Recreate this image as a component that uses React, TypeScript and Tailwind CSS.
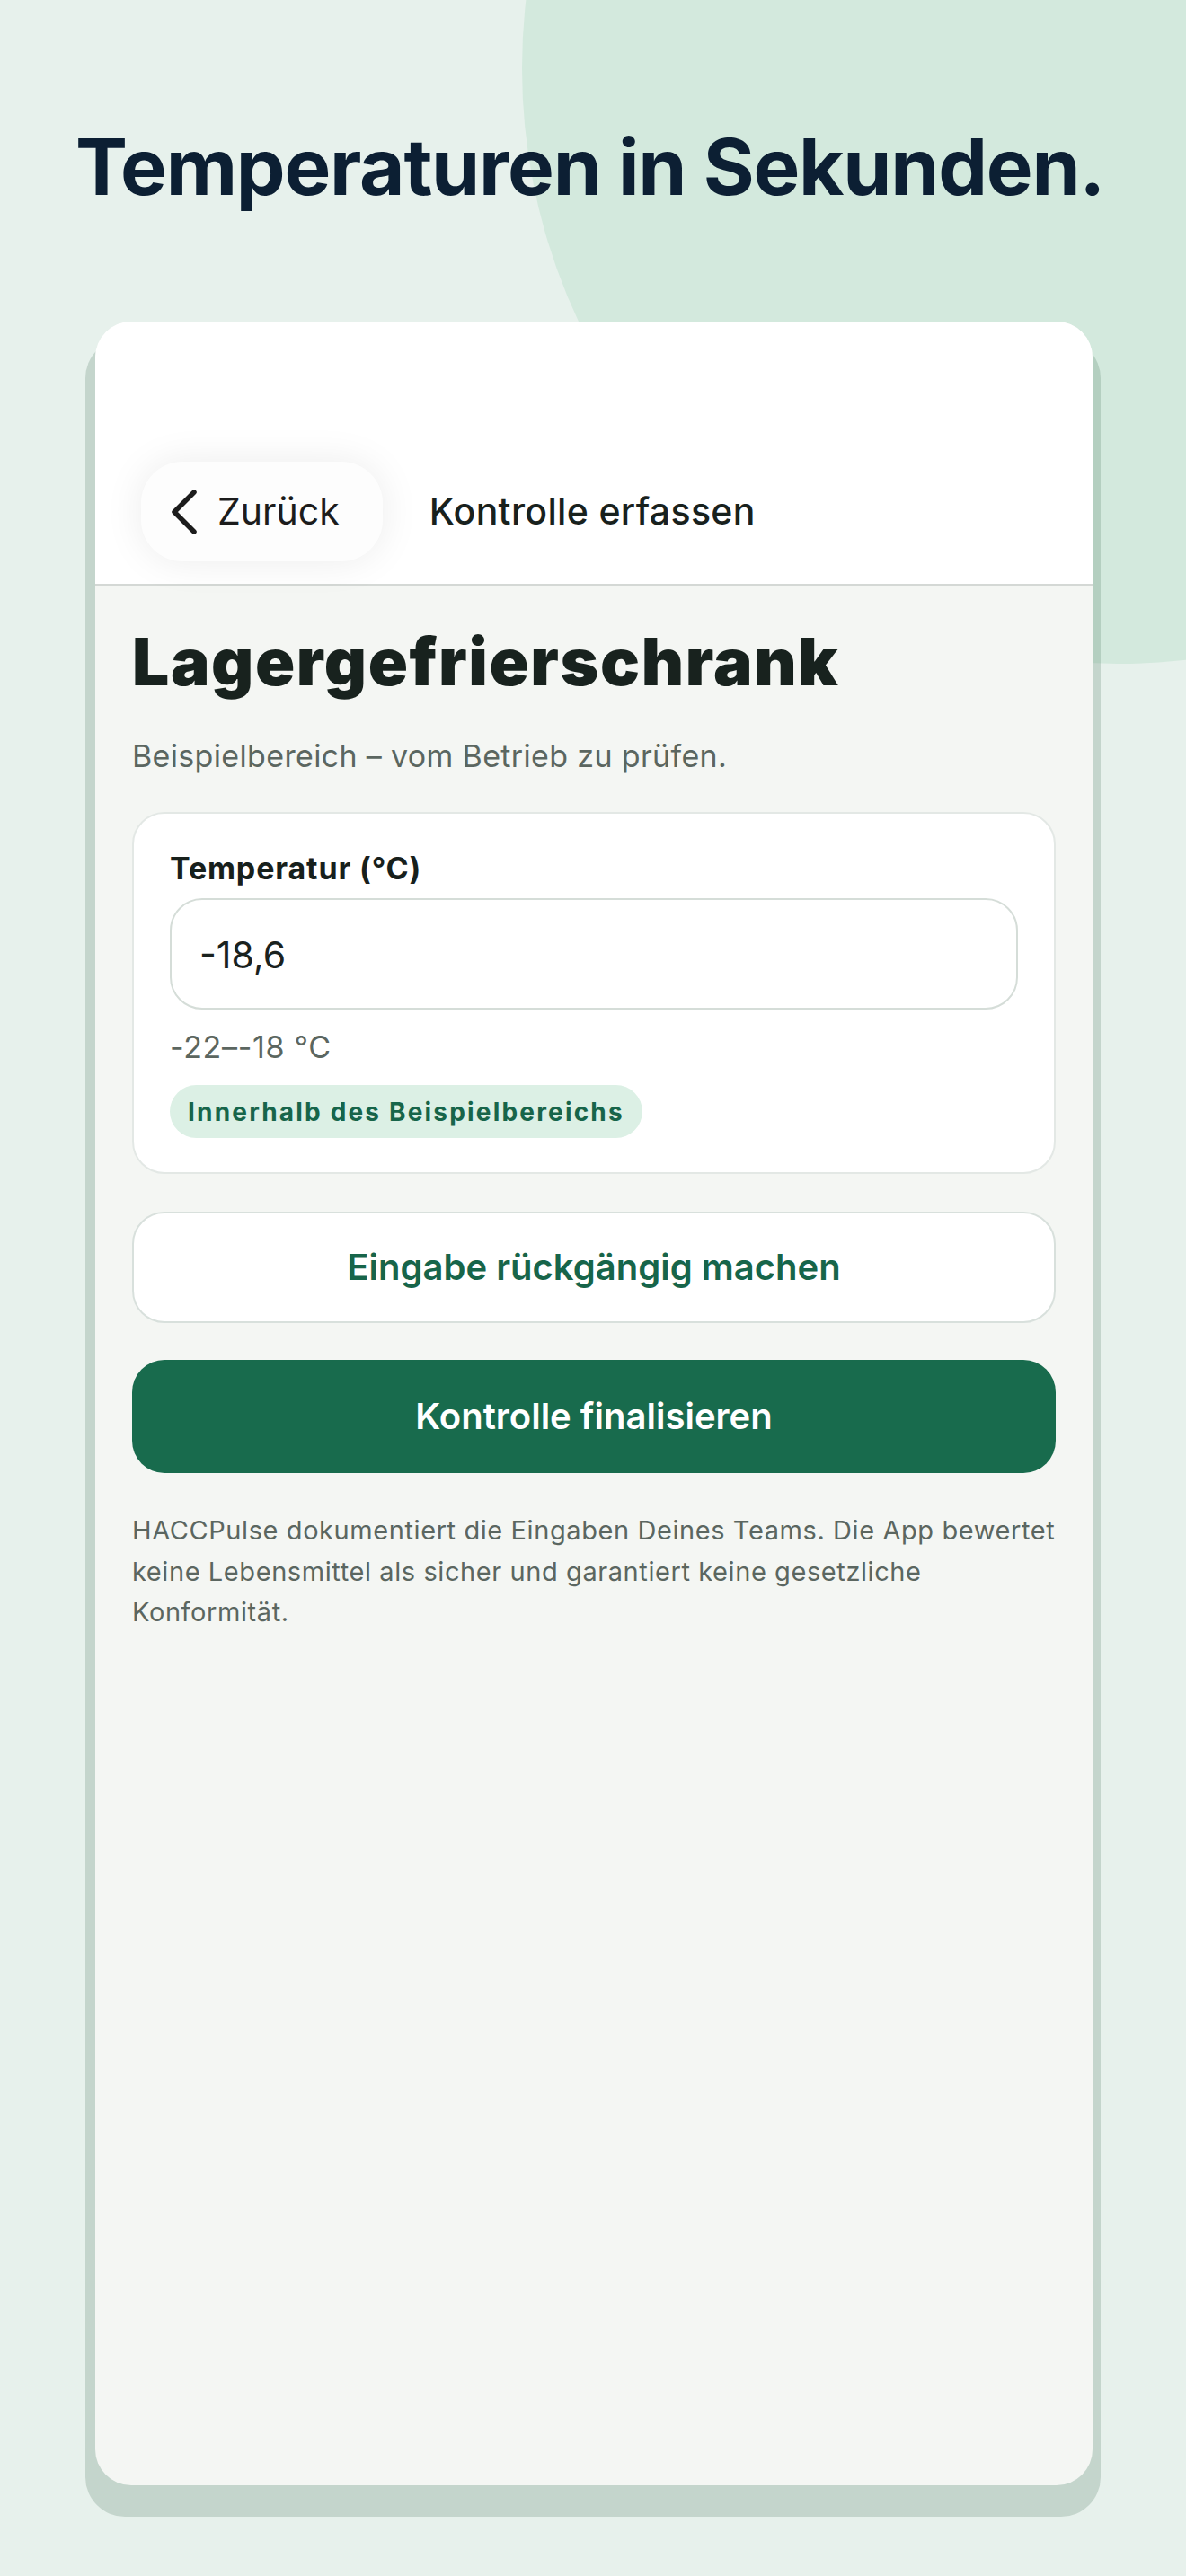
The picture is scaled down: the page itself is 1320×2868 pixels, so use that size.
const font = { fontFamily: 'Inter, "Noto Sans", sans-serif' };

export default function App() {
  return (
    <div className="relative h-[2868px] w-[1320px] overflow-hidden bg-[#e7f1ec]" style={font}>
      {/* decorative circle top right */}
      <div className="absolute left-[581px] top-[-587px] h-[1326px] w-[1326px] rounded-full bg-[#d3e9dd]" />

      <div className="relative">
        <h1 className="pl-[84px] pt-[142px] text-[87px] font-bold leading-none tracking-[-0.014em] text-[#0c1f33]">
          Temperaturen in Sekunden.
        </h1>

        <div className="relative ml-[106px] mt-[129px] w-[1110px]">
          <div className="absolute bottom-[-35px] left-[-11px] right-[-9px] top-[19px] rounded-[44px] bg-[rgba(61,106,81,0.2)]" />

          <div className="relative flex h-[2409px] flex-col overflow-hidden rounded-[40px] bg-[#f4f6f3]">
            <header className="flex h-[294px] items-end border-b-2 border-[#d4d8d5] bg-white pb-[25px] pl-[51px]">
              <button
                type="button"
                className="flex h-[111px] items-center gap-[22px] rounded-[46px] bg-[#fdfdfd] pl-[33px] pr-[48px] shadow-[0_0_44px_rgba(0,0,0,0.08)]"
              >
                <svg width="30" height="50" viewBox="0 0 30 50" fill="none" className="shrink-0">
                  <polyline
                    points="26,3 4,25 26,47"
                    stroke="#1c1c1c"
                    strokeWidth="5.5"
                    strokeLinecap="round"
                    strokeLinejoin="round"
                  />
                </svg>
                <span className="text-[41px] font-normal text-[#1c1c1c]">Zurück</span>
              </button>
              <span className="ml-[52px] flex h-[111px] items-center text-[41px] font-medium tracking-[0.008em] text-[#18211d]">
                Kontrolle erfassen
              </span>
            </header>

            <main className="px-[41px] pt-[48px]">
              <h2 className="text-[73px] font-black leading-none tracking-[0.022em] text-[#18221e]">Lagergefrierschrank</h2>
              <p className="mt-[49px] text-[34px] leading-[1.2] tracking-[0.01em] text-[#5b6660]">
                Beispielbereich – vom Betrieb zu prüfen.
              </p>

              <section className="mt-[41px] rounded-[36px] border-2 border-[#e3e8e5] bg-white px-[40px] pb-[38px] pt-[41px]">
                <label className="block text-[34px] font-bold leading-[1.2] tracking-[0.025em] text-[#17201c]">
                  Temperatur (°C)
                </label>
                <div className="mt-[12px] flex h-[124px] items-center rounded-[36px] border-2 border-[#d5ddd8] pl-[31px] pt-[4px] text-[41px] text-[#1a221e]">
                  -18,6
                </div>
                <p className="mt-[22px] text-[34px] leading-[1.2] tracking-[0.02em] text-[#5b6660]">-22–-18 °C</p>
                <div className="mt-[22px] flex">
                  <span className="flex h-[59px] items-center rounded-full bg-[#dcf0e5] px-[20px] text-[28px] font-bold tracking-[0.078em] text-[#17654a]">
                    Innerhalb des Beispielbereichs
                  </span>
                </div>
              </section>

              <button
                type="button"
                className="mt-[42px] flex h-[124px] w-full items-center justify-center rounded-[36px] border-2 border-[#d8e0dc] bg-white text-[40px] font-semibold text-[#17654a]"
              >
                Eingabe rückgängig machen
              </button>
              <button
                type="button"
                className="mt-[41px] flex h-[126px] w-full items-center justify-center rounded-[36px] bg-[#186b4d] text-[40px] font-semibold text-white"
              >
                Kontrolle finalisieren
              </button>

              <p className="mt-[41px] text-[29px] leading-[45.5px] tracking-[0.02em] text-[#5b6660]">
                HACCPulse dokumentiert die Eingaben Deines Teams. Die App bewertet keine Lebensmittel als sicher und
                garantiert keine gesetzliche Konformität.
              </p>
            </main>
          </div>
        </div>
      </div>
    </div>
  );
}
